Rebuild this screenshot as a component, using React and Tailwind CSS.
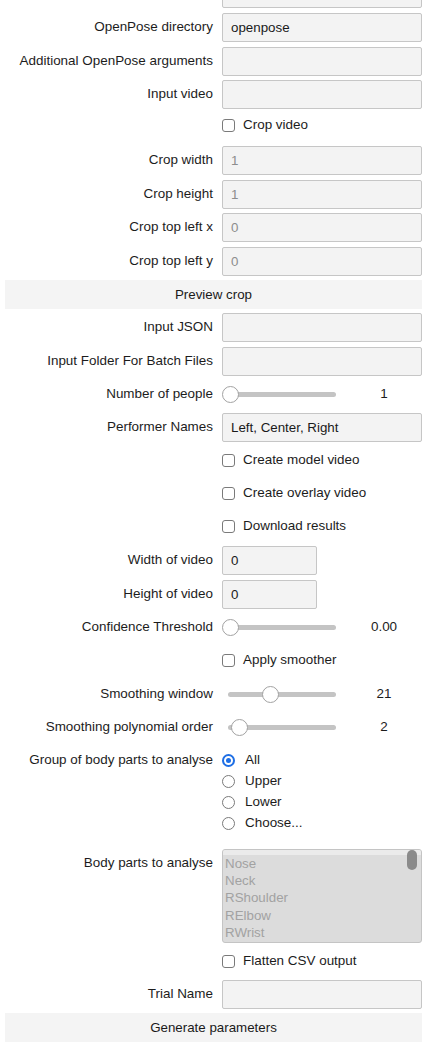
import React from "react"

const Row = ({ label, h, children }) => (
  <div className={`flex items-start ${h}`}>
    <div className="w-[213px] shrink-0 h-[29px] flex items-center justify-end text-right whitespace-nowrap">{label}</div>
    <div className="ml-[9px] h-[29px] flex items-center">{children}</div>
  </div>
)

const Field = ({ value = "", muted, w = "w-[200px]" }) => (
  <input
    readOnly
    value={value}
    className={`${w} h-[29px] border border-[#c6c6c6] bg-[#f3f3f3] rounded-[2px] px-[8px] text-[13.33px] outline-none ${
      muted ? "text-[#8d8d8d]" : "text-[#1a1a1a]"
    }`}
  />
)

const Check = ({ label }) => (
  <div className="flex items-center">
    <span className="w-[13px] h-[13px] rounded-[3px] border border-[#7a7a7a] bg-white" />
    <span className="ml-[8px]">{label}</span>
  </div>
)

const Slider = ({ thumb, value }) => (
  <div className="flex items-center">
    <div className="relative w-[120px] h-[29px]">
      <div className="absolute left-[6px] top-[12px] w-[108px] h-[5px] rounded-full bg-[#c4c4c4]" />
      <div className={`absolute top-[6px] w-[17px] h-[17px] rounded-full bg-white border border-[#a2a2a2] ${thumb}`} />
    </div>
    <span className="w-[84px] text-center">{value}</span>
  </div>
)

const Radio = ({ label, checked }) => (
  <div className="h-[21px] flex items-center">
    {checked ? (
      <span className="w-[13px] h-[13px] rounded-full border-2 border-[#1f6fe5] bg-white flex items-center justify-center">
        <span className="w-[5px] h-[5px] rounded-full bg-[#1f6fe5]" />
      </span>
    ) : (
      <span className="w-[13px] h-[13px] rounded-full border border-[#7a7a7a] bg-white" />
    )}
    <span className="ml-[10px]">{label}</span>
  </div>
)

const Button = ({ children }) => (
  <button className="ml-[5px] w-[417px] h-[29px] bg-[#f4f4f4] text-[13.33px] text-[#1a1a1a]">{children}</button>
)

const bodyParts = ["Nose", "Neck", "RShoulder", "RElbow", "RWrist"]

export default function App() {
  return (
    <div
      className="bg-white min-h-[1052px] overflow-hidden text-[13.45px] text-[#1c1c1c]"
      style={{ fontFamily: '"Liberation Sans", Arial, sans-serif' }}
    >
      <div className="-mt-[21px]">
        <Row h="h-[34px]" label="">
          <Field />
        </Row>
        <Row h="h-[34px]" label="OpenPose directory">
          <Field value="openpose" />
        </Row>
        <Row h="h-[33px]" label="Additional OpenPose arguments">
          <Field />
        </Row>
        <Row h="h-[31px]" label="Input video">
          <Field />
        </Row>
        <Row h="h-[35px]" label="">
          <Check label="Crop video" />
        </Row>
        <Row h="h-[34px]" label="Crop width">
          <Field value="1" muted />
        </Row>
        <Row h="h-[33px]" label="Crop height">
          <Field value="1" muted />
        </Row>
        <Row h="h-[34px]" label="Crop top left x">
          <Field value="0" muted />
        </Row>
        <Row h="h-[33px]" label="Crop top left y">
          <Field value="0" muted />
        </Row>
        <div className="h-[33px]">
          <Button>Preview crop</Button>
        </div>
        <Row h="h-[34px]" label="Input JSON">
          <Field />
        </Row>
        <Row h="h-[33px]" label="Input Folder For Batch Files">
          <Field />
        </Row>
        <Row h="h-[33px]" label="Number of people">
          <Slider thumb="left-[0px]" value="1" />
        </Row>
        <Row h="h-[33px]" label="Performer Names">
          <Field value="Left, Center, Right" />
        </Row>
        <Row h="h-[33px]" label="">
          <Check label="Create model video" />
        </Row>
        <Row h="h-[33px]" label="">
          <Check label="Create overlay video" />
        </Row>
        <Row h="h-[34px]" label="">
          <Check label="Download results" />
        </Row>
        <Row h="h-[34px]" label="Width of video">
          <Field value="0" w="w-[95px]" />
        </Row>
        <Row h="h-[33px]" label="Height of video">
          <Field value="0" w="w-[95px]" />
        </Row>
        <Row h="h-[33px]" label="Confidence Threshold">
          <Slider thumb="left-[0px]" value="0.00" />
        </Row>
        <Row h="h-[34px]" label="">
          <Check label="Apply smoother" />
        </Row>
        <Row h="h-[33px]" label="Smoothing window">
          <Slider thumb="left-[40px]" value="21" />
        </Row>
        <Row h="h-[33px]" label="Smoothing polynomial order">
          <Slider thumb="left-[9px]" value="2" />
        </Row>

        {/* radio group */}
        <div className="flex items-start pt-[4px] h-[103px]">
          <div className="w-[213px] shrink-0 h-[21px] flex items-center justify-end whitespace-nowrap">
            Group of body parts to analyse
          </div>
          <div className="ml-[9px]">
            <Radio label="All" checked />
            <Radio label="Upper" />
            <Radio label="Lower" />
            <Radio label="Choose..." />
          </div>
        </div>

        <div className="flex items-start h-[98px]">
          <div className="w-[213px] shrink-0 h-[29px] flex items-center justify-end whitespace-nowrap">
            Body parts to analyse
          </div>
          <div className="ml-[9px] relative w-[200px] h-[94px] border border-[#c4c4c4] rounded-[3px] bg-[#dcdcdc] overflow-hidden">
            <div className="h-[5px] bg-[#ebebeb]" />
            <div className="pl-[2px] text-[13.33px] leading-[17.2px] text-[#a2a2a2]">
              {bodyParts.map((p) => (
                <div key={p}>{p}</div>
              ))}
            </div>
            <div className="absolute right-[4px] top-[0px] w-[10px] h-[20px] rounded-full bg-[#8b8b8b]" />
          </div>
        </div>

        <Row h="h-[33px]" label="">
          <Check label="Flatten CSV output" />
        </Row>
        <Row h="h-[33px]" label="Trial Name">
          <Field />
        </Row>
        <div className="h-[33px]">
          <Button>Generate parameters</Button>
        </div>
      </div>
    </div>
  )
}
